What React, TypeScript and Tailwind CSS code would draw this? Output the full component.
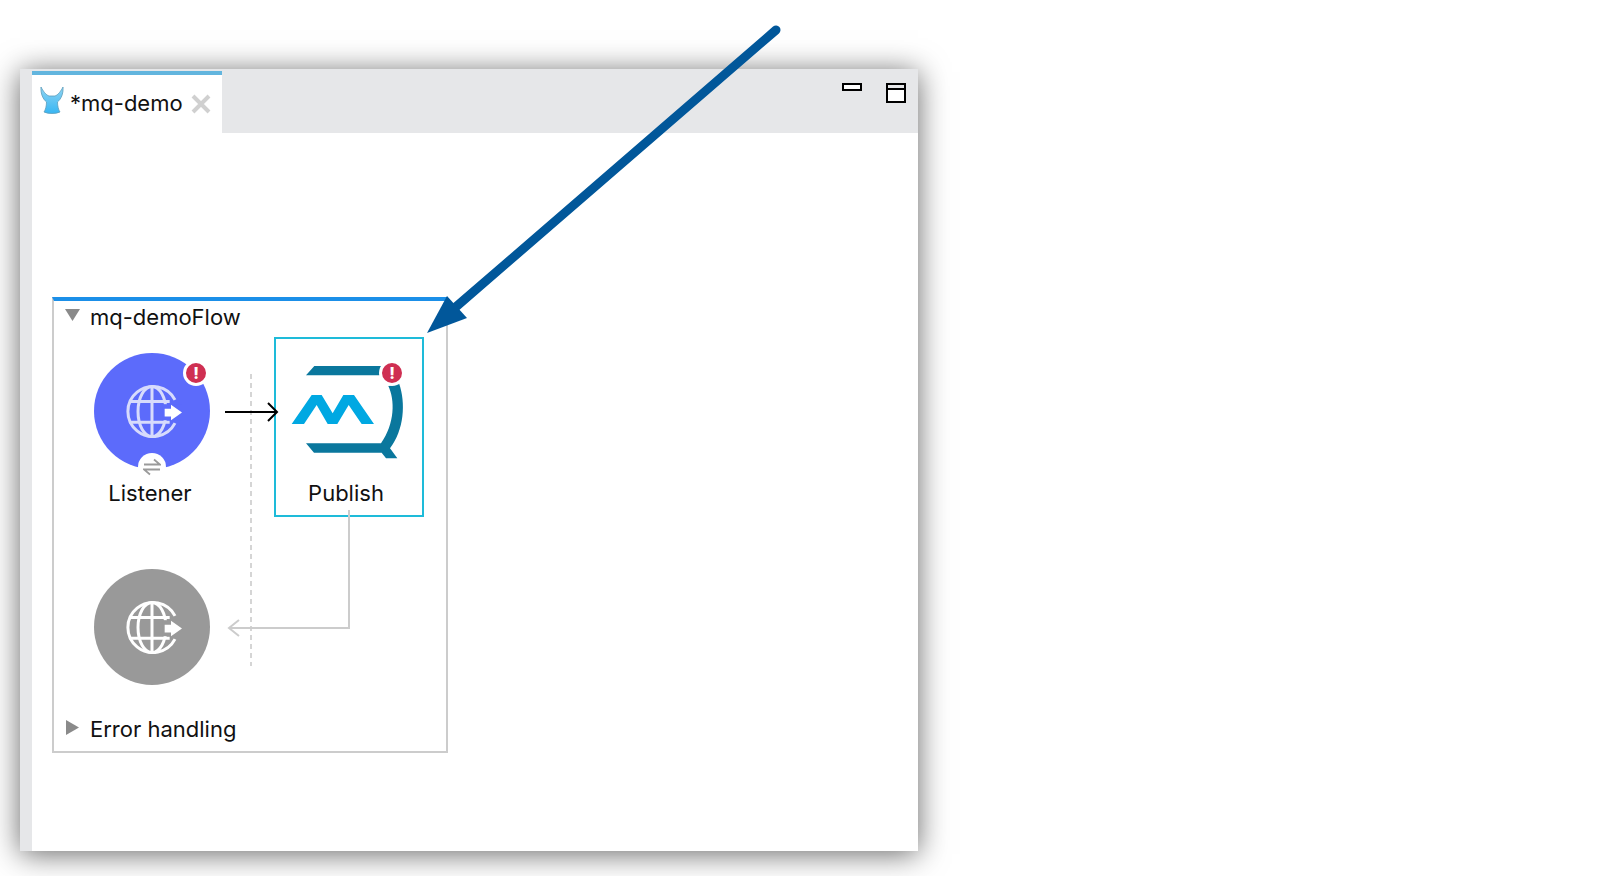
const labelFont = "font-['Inter','Liberation_Sans',sans-serif] text-[22px] leading-[30px] text-[#111]";

function Globe({ line, bg }: { line: string; bg: string }) {
  return (
    <svg width="60" height="57" viewBox="65 95 180 170" fill="none">
      <g stroke={line} strokeWidth="9">
        <path d="M224 145 A75 75 0 1 0 224 215" />
        <ellipse cx="155" cy="180" rx="42" ry="75" />
        <path d="M155 105V255M88 150H208M88 212H208" />
      </g>
      <rect x="186" y="158" width="70" height="48" fill={bg} />
      <path d="M193 172H212V160L245 183L212 206V195H193Z" fill="#fff" />
    </svg>
  );
}

function ErrorBadge() {
  return (
    <span className="absolute flex h-[26px] w-[26px] items-center justify-center rounded-full border-[3px] border-white bg-[#cf2f52] font-['Inter',sans-serif] text-[16px] leading-none font-extrabold text-white">
      !
    </span>
  );
}

function MuleIcon() {
  return (
    <svg width="24" height="28" viewBox="0 0 24 28">
      <defs>
        <linearGradient id="fox" x1="0" y1="0" x2="0" y2="1">
          <stop offset="0" stopColor="#8fd4f2" />
          <stop offset="1" stopColor="#38b6f3" />
        </linearGradient>
      </defs>
      <path
        d="M1 0C0.5 7 3 12 6.5 15C6.5 19 5.5 23 4 25C8 27 16 27 20 25C18.5 23 17.5 19 17.5 15C21 12 23.5 7 23 0C21 4 18 8 15 9H9C6 8 3 4 1 0Z"
        fill="url(#fox)"
        stroke="#5c9dbb"
        strokeWidth="0.8"
      />
    </svg>
  );
}

function MqLogo() {
  return (
    <svg width="130" height="120" viewBox="0 0 390 360">
      <path d="M78 76L103 48H304Q298 62 305 76Z" fill="#0a779d" />
      <path
        d="M325 108C345 150 345 220 303 280H78L102 308H305L318 325H352L330 295C372 240 378 160 357 100Z"
        fill="#0a779d"
      />
      <path
        d="M35 222L95 135H125L158 190L190 135H222L282 222H245L206 165L172 222H143L110 165L72 222Z"
        fill="#00a8e2"
      />
    </svg>
  );
}

export default function App() {
  return (
    <div className="relative h-[876px] w-[1618px] overflow-hidden bg-white pt-[69px] pl-[20px]">
      <div className="flex h-[782px] w-[898px] bg-[#e6e7e9] shadow-[0_3px_28px_rgba(0,0,0,0.6)]">
        <div className="w-3 shrink-0" />
        <div className="flex flex-1 flex-col">
          {/* tab bar */}
          <div className="flex h-[64px] shrink-0 justify-between pt-0.5">
            <div className="flex w-[190px] items-start border-t-4 border-[#62b5de] bg-white pt-[12px] pl-[8px]">
              <MuleIcon />
              <span className="mt-[1px] ml-[6px] font-['Inter','Liberation_Sans',sans-serif] text-[22px] leading-[30px] text-[#111]">
                *mq-demo
              </span>
              <svg className="mt-[7px] ml-[8px]" width="20" height="20" viewBox="0 0 20 20">
                <path d="M2 2L18 18M18 2L2 18" stroke="#d0d0d0" strokeWidth="4" />
              </svg>
            </div>
            <div className="flex items-start gap-6 pt-3 pr-3">
              <div className="h-2 w-5 border-2 border-black bg-white" />
              <div className="h-5 w-5 border-2 border-black bg-white">
                <div className="h-[3px] border-b-2 border-black bg-[#e6e7e9] box-content" />
              </div>
            </div>
          </div>

          {/* canvas */}
          <div className="flex-1 bg-white pt-[164px] pl-[20px]">
            <div className="flex h-[456px] w-[396px] flex-col border-2 border-t-4 border-[#cccccc] border-t-[#1b8fe8]">
              <div className="flex h-9 items-start pt-[1px] pl-[11px]">
                <svg className="mt-[7px]" width="15" height="12" viewBox="0 0 15 12">
                  <path d="M0 0H15L7.5 12Z" fill="#8a8a8a" />
                </svg>
                <span className={`ml-[10px] ${labelFont}`}>mq-demoFlow</span>
              </div>

              <div className="flex h-[180px] pl-[40px]">
                <div className="flex w-[116px] flex-col items-center pt-4">
                  <div className="relative flex h-[116px] w-[116px] shrink-0 items-center justify-center rounded-full bg-[#5c6bfb]">
                    <Globe line="#d7dbfc" bg="#5c6bfb" />
                    <div className="absolute top-[7px] left-[89px]">
                      <ErrorBadge />
                    </div>
                    <span className="absolute top-[100px] left-[44px] flex h-7 w-7 items-center justify-center rounded-full bg-white">
                      <svg width="18" height="18" viewBox="0 0 18 18" fill="none" stroke="#9a9a9a" strokeWidth="1.8">
                        <path d="M1 6.5H17L11 1.5M17 11.5H1L7 16.5" />
                      </svg>
                    </span>
                  </div>
                  <span className={`mt-[9px] -ml-[4px] ${labelFont}`}>Listener</span>
                </div>

                <div className="relative ml-[64px] flex h-[180px] w-[150px] flex-col items-center border-2 border-[#1ebbd9]">
                  <div className="mt-[11px] ml-[4px] h-[120px] w-[130px] shrink-0 self-start">
                    <MqLogo />
                  </div>
                  <span className={`mt-[8px] -ml-[6px] ${labelFont}`}>Publish</span>
                  <div className="absolute top-[21px] left-[103px]">
                    <ErrorBadge />
                  </div>
                </div>
              </div>

              <div className="mt-[52px] ml-[40px] flex h-[116px] w-[116px] items-center justify-center rounded-full bg-[#999999]">
                <Globe line="#ffffff" bg="#999999" />
              </div>

              <div className="mt-auto flex items-start pb-[7px] pl-[12px]">
                <svg className="mt-[6px]" width="13" height="15" viewBox="0 0 13 15">
                  <path d="M0 0L13 7.5L0 15Z" fill="#8a8a8a" />
                </svg>
                <span className={`ml-[11px] ${labelFont}`}>Error handling</span>
              </div>
            </div>
          </div>
        </div>
      </div>

      {/* connectors and annotation arrow */}
      <svg className="pointer-events-none absolute top-0 left-0" width="1618" height="876" fill="none">
        <path d="M251 374V666" stroke="#c8c8c8" strokeWidth="1.5" strokeDasharray="5 4" />
        <path d="M225 412H277M268 403L277 412L268 421" stroke="#000" strokeWidth="2" />
        <path d="M349 510V628H229M239 620L229 628L239 636" stroke="#cccccc" strokeWidth="2" />
        <path d="M776 30L450 312" stroke="#01579a" strokeWidth="9" strokeLinecap="round" />
        <path d="M427 333L447 296L467 318Z" fill="#01579a" />
      </svg>
    </div>
  );
}
